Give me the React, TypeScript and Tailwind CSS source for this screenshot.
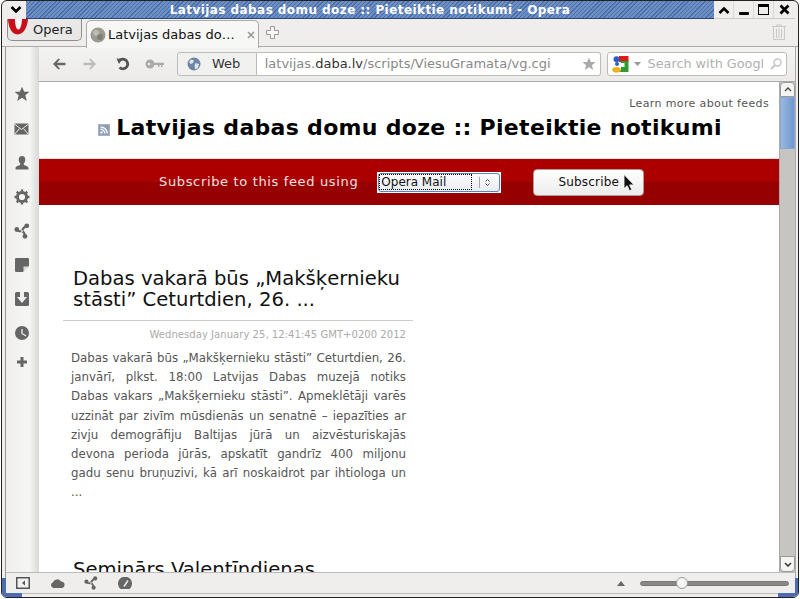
import React from "react";

const G = "#666";

const Star = ({ c = G, s = 16 }: { c?: string; s?: number }) => (
  <svg width={s} height={s} viewBox="0 0 16 16"><path d="M8 .8l2.200 5h5.300l-4.200 3.500 1.500 5.600L8 11.800l-4.800 3.100 1.500-5.600L.5 5.800h5.300z" fill={c} /></svg>
);
const Mail = () => (
  <svg width="15" height="12" viewBox="0 0 15 12"><rect x=".5" y=".5" width="14" height="11" fill={G} /><path d="M.5 1l7 5.500 7-5.500M.5 11.500l5-6M14.500 11.500l-5-6" stroke="#eee" strokeWidth="1" fill="none" /></svg>
);
const User = () => (
  <svg width="16" height="16" viewBox="0 0 16 16"><path d="M8 1c2.200 0 3.300 1.700 3.300 3.800 0 1.500-.7 3-1.500 3.700v1.200c.4.6 4.200 1 4.700 3.200V14.500H1.500v-1.600c.5-2.200 4.300-2.600 4.700-3.200V8.500C5.400 7.800 4.700 6.300 4.700 4.800 4.700 2.700 5.800 1 8 1z" fill={G} /></svg>
);
const Gear = () => (
  <svg width="16" height="16" viewBox="0 0 16 16"><circle cx="8" cy="8" r="4.600" fill="none" stroke={G} strokeWidth="3" /><path d="M8 .5v3M8 12.500v3M.5 8h3M12.500 8h3M2.700 2.700l2.100 2.100M11.200 11.200l2.100 2.100M13.300 2.700l-2.100 2.100M4.800 11.200l-2.100 2.100" stroke={G} strokeWidth="2.400" /></svg>
);
const Unite = ({ s = 16 }: { s?: number }) => (
  <svg width={s} height={s} viewBox="0 0 16 16">
    <g fill={G}>
      <circle cx="2.800" cy="6.500" r="2.400" />
      <circle cx="12.800" cy="2.800" r="2.400" />
      <circle cx="11" cy="13.300" r="2.400" />
    </g>
    <g stroke={G} strokeWidth="2" fill="none">
      <path d="M3 7C5 9 6 8.500 8 8" />
      <path d="M12.500 3C10 4 8.500 6 8 8" />
      <path d="M11 13.500C11 11 10 9 8 8" />
    </g>
    <circle cx="8" cy="8" r=".9" fill="#eee" />
  </svg>
);
const Note = () => (
  <svg width="14" height="14" viewBox="0 0 14 14"><path d="M1 0h12a1 1 0 011 1v7l-6 6H1a1 1 0 01-1-1V1a1 1 0 011-1z" fill={G} /><path d="M8.500 14V8.500H14z" fill="#ddd" /></svg>
);
const Down = () => (
  <svg width="14" height="14" viewBox="0 0 14 14"><rect width="14" height="14" rx="1.500" fill={G} /><path d="M5 0h4v5h3l-5 6-5-6h3z" fill="#f0f0f0" /></svg>
);
const Clock = () => (
  <svg width="14" height="14" viewBox="0 0 14 14"><circle cx="7" cy="7" r="7" fill={G} /><path d="M7 3v4.500L11 10" stroke="#f0f0f0" strokeWidth="1.300" fill="none" /></svg>
);
const Plus = () => (
  <svg width="12" height="12" viewBox="0 0 12 12"><path d="M4.500 1h3v3.500H11v3H7.500V11h-3V7.500H1v-3h3.500z" fill={G} /></svg>
);
const Arrow = ({ c, flip }: { c: string; flip?: boolean }) => (
  <svg width="14" height="12" viewBox="0 0 14 12" style={flip ? { transform: "scaleX(-1)" } : undefined}><path d="M6.500 0.500L1 6l5.500 5.500 1.500-1-3-3.200h8.500V4.700H5l3-3.200z" fill={c} /></svg>
);
const Reload = () => (
  <svg width="14" height="14" viewBox="0 0 14 14"><path d="M4 3.200A4.800 4.800 0 117 11.800a5 5 0 01-3.500-1.400" stroke="#555" strokeWidth="2.800" fill="none" /><path d="M.5 1.500l6 .5-3.500 5z" fill="#555" /></svg>
);
const Key = () => (
  <svg width="20" height="10" viewBox="0 0 20 10"><circle cx="5" cy="5" r="4.500" fill="#aaa" /><circle cx="4" cy="5" r="1.300" fill="#eee" /><path d="M8 3.800h11V6h-1.500v2H16V6h-1.500v2H13V6H8z" fill="#aaa" /></svg>
);
const Globe = () => (
  <svg width="14" height="14" viewBox="0 0 14 14"><circle cx="7" cy="7" r="6.500" fill="#6d86a6" /><path d="M4 2.500l3 1L6 6 3.500 7 2 5zM8.500 6l3.500 1-1 4-2.500 1.500L7.500 9z" fill="#e3e6ea" /></svg>
);
const GoogleG = () => (
  <svg width="17" height="17" viewBox="0 0 17 17">
    <path d="M7 0h9.500v6H7z" fill="#e01b1b" />
    <path d="M8 5h8.500v11H7l2-2V7z" fill="#2f9a2f" />
    <circle cx="4.500" cy="3.300" r="3" fill="#2a5fc7" />
    <circle cx="5" cy="8" r="2" fill="#2a5fc7" />
    <ellipse cx="4.500" cy="13.800" rx="4.300" ry="2.800" fill="#eab01e" />
    <path d="M9 7h3.500v4H9z" fill="#fff" />
  </svg>
);
const Search = () => (
  <svg width="12" height="12" viewBox="0 0 12 12"><circle cx="7.500" cy="4.500" r="3.500" fill="none" stroke="#c4c4c4" strokeWidth="1.400" /><path d="M5 7L1 11" stroke="#c4c4c4" strokeWidth="1.800" /></svg>
);
const Trash = () => (
  <svg width="14" height="16" viewBox="0 0 14 16"><path d="M0 2.500h14M4.500 2.500V1h5v1.500M1.500 3v12.500h11V3M4.500 5v9M7 5v9M9.500 5v9" stroke="#c9c9c6" fill="none" /></svg>
);
const Rss = () => (
  <svg width="12" height="12" viewBox="0 0 12 12"><rect width="12" height="12" fill="#8d9db5" /><rect x=".5" y=".5" width="11" height="11" fill="none" stroke="#a8b4c6" /><circle cx="3.500" cy="8.500" r="1.200" fill="#fff" /><path d="M2.500 5.200a4.300 4.300 0 014.300 4.300M2.500 2.800a6.700 6.700 0 016.700 6.700" stroke="#fff" strokeWidth="1.200" fill="none" /></svg>
);
const Cloud = () => (
  <svg width="15" height="10" viewBox="0 0 15 10"><path d="M3.500 10A3 3 0 013 4.200 4.500 4.500 0 0111 3.500 3.300 3.300 0 0112 10z" fill={G} /></svg>
);
const Gauge = () => (
  <svg width="14" height="12" viewBox="0 0 14 12"><path d="M2.500 12A7 7 0 1111.500 12z" fill={G} /><path d="M6 9.500L10 3.500" stroke="#eee" strokeWidth="1.500" /></svg>
);
const PanelToggle = () => (
  <svg width="14" height="12" viewBox="0 0 14 12"><rect x=".75" y=".75" width="12.500" height="10.500" fill="#f2f2f2" stroke="#555" strokeWidth="1.500" /><path d="M9 3.500v5L6 6z" fill="#555" /></svg>
);
const Cursor = () => (
  <svg width="13" height="19" viewBox="0 0 13 19"><path d="M1 .5v14l3.200-2.800 2.300 5 2.300-1-2.200-4.800H11z" fill="#111" stroke="#fff" strokeWidth=".8" /></svg>
);
const OperaO = () => (
  <svg width="20" height="16" viewBox="0 0 20 16" className="shrink-0"><path d="M0 0h20c-.5 7-4 15.500-10.500 15.500S.5 7 0 0z" fill="#c8101a" /><path d="M7 0h7c-.3 5.500-1.500 10.500-3.700 10.500S7 5.500 7 0z" fill="#f6f6f6" /></svg>
);
const FavIcon = () => (
  <svg width="16" height="16" viewBox="0 0 16 16"><circle cx="8" cy="8" r="7.500" fill="#9a9a90" /><circle cx="6" cy="6" r="3" fill="#bdbdb3" /><circle cx="10" cy="10" r="3" fill="#7f7f76" /></svg>
);

const sideIcons = [
  { el: <Star />, cls: "h-[36px]" },
  { el: <Mail />, cls: "h-[34px]" },
  { el: <User />, cls: "h-[34px]" },
  { el: <Gear />, cls: "h-[34px]" },
  { el: <Unite />, cls: "h-[34px]" },
  { el: <Note />, cls: "h-[34px]" },
  { el: <Down />, cls: "h-[34px]" },
  { el: <Clock />, cls: "h-[34px]" },
  { el: <Plus />, cls: "h-[24px]" },
];

const bodyLines = [
  "Dabas vakarā būs „Makšķernieku stāsti” Ceturtdien, 26.",
  "janvārī, plkst. 18:00 Latvijas Dabas muzejā notiks",
  "Dabas vakars „Makšķernieku stāsti”. Apmeklētāji varēs",
  "uzzināt par zivīm mūsdienās un senatnē – iepazīties ar",
  "zivju demogrāfiju Baltijas jūrā un aizvēsturiskajās",
  "devona perioda jūrās, apskatīt gandrīz 400 miljonu",
  "gadu senu bruņuzivi, kā arī noskaidrot par ihtiologa un",
];

export default function App() {
  return (
    <div className="w-[800px] h-[599px] overflow-hidden bg-white pl-px font-['DejaVu_Sans',sans-serif] text-[#222]">
      <div className="w-[798px] h-[598px] relative overflow-hidden flex flex-col border border-[#222] rounded-[6px] bg-[#efeeed]">
        {/* title bar */}
        <div className="h-[18px] flex shrink-0">
          <div className="w-[24px] flex items-center justify-center pl-[4px]">
            <svg width="12" height="8" viewBox="0 0 12 8"><path d="M1.500 1L6 5.500 10.500 1" stroke="#000" strokeWidth="2.600" fill="none" /></svg>
          </div>
          <div className="flex-1 flex items-center justify-center text-white font-bold text-[12px] tracking-[0.43px] border-b border-[#24457f] bg-[repeating-linear-gradient(135deg,#4a6ea9_0px,#4a6ea9_1px,#6d8fc4_1px,#6d8fc4_3px)]">
            Latvijas dabas domu doze :: Pieteiktie notikumi - Opera
          </div>
          <div className="w-[81px] mr-[3px] flex border-b border-[#ccc]">
            <div className="w-[20px] flex items-center justify-center border-r border-[#d8d8d6]">
              <svg width="12" height="8" viewBox="0 0 12 8"><path d="M1.500 7L6 2.500 10.500 7" stroke="#000" strokeWidth="2.600" fill="none" /></svg>
            </div>
            <div className="w-[20px] flex items-center justify-center border-r border-[#d8d8d6]">
              <div className="w-[10px] h-[3px] bg-black mt-[7px] rounded-[1px]" />
            </div>
            <div className="w-[20px] flex items-center justify-center border-r border-[#d8d8d6]">
              <div className="w-[11px] h-[11px] border border-black border-t-[3px]" />
            </div>
            <div className="w-[21px] flex items-center justify-center">
              <svg width="11" height="11" viewBox="0 0 11 11"><path d="M1.500 1.500l8 8M9.500 1.500l-8 8" stroke="#000" strokeWidth="2.800" /></svg>
            </div>
          </div>
        </div>
        {/* tab row */}
        <div className="h-[28px] shrink-0 flex items-start pl-[5px] pr-[12px] border-b border-[#aaa]">
          <div className="h-[22px] w-[75px] bg-[#e9e8e6] border border-t-0 border-[#8f8f8f] rounded-b-[5px] flex items-start overflow-hidden">
            <OperaO />
            <span className="text-[13px] leading-[22px] text-[#222] ml-[5px]">Opera</span>
          </div>
          <div className="h-[28px] w-[173px] ml-[4px] mt-px bg-[#f7f7f6] border border-b-0 border-[#aaa] rounded-t-[5px] flex items-center pl-[3px] relative z-10">
            <FavIcon />
            <span className="text-[13px] text-[#111] ml-[2px] whitespace-nowrap">Latvijas dabas do…</span>
            <svg className="ml-[12px]" width="8" height="8" viewBox="0 0 8 8"><path d="M1 1l6 6M7 1L1 7" stroke="#999" strokeWidth="1.600" /></svg>
          </div>
          <div className="ml-[7px] mt-[7px]">
            <svg width="13" height="13" viewBox="0 0 13 13"><path d="M4.500.5h4v4h4v4h-4v4h-4v-4h-4v-4h4z" fill="#f8f8f8" stroke="#999" /></svg>
          </div>
          <div className="ml-auto mt-[5px]"><Trash /></div>
        </div>
        {/* main */}
        <div className="flex-1 min-h-0 flex">
          <div className="w-[4px] bg-[#efeeed] border-r border-[#999] shrink-0" />
          <div className="flex-1 min-w-0 flex flex-col">
            <div className="flex-1 min-h-0 flex">
              {/* side panel */}
              <div className="w-[33px] shrink-0 bg-[linear-gradient(90deg,#efeeed,#f6f6f5_70%,#d8d8d6)] flex flex-col items-center pt-[29px] pr-[2px]">
                {sideIcons.map((it, i) => (
                  <div key={i} className={`${it.cls} flex items-center justify-center`}>{it.el}</div>
                ))}
              </div>
              <div className="flex-1 min-w-0 flex flex-col">
                {/* toolbar */}
                <div className="h-[35px] shrink-0 flex items-center bg-[linear-gradient(#f3f3f2,#ecebea)] border-b border-[#aaa] pl-[13px] pr-[8px]">
                  <Arrow c="#666" />
                  <div className="ml-[17px]"><Arrow c="#bbb" flip /></div>
                  <div className="ml-[19px]"><Reload /></div>
                  <div className="ml-[15px]"><Key /></div>
                  <div className="ml-[12px] w-[80px] h-[24px] rounded-l-[3px] border border-[#bbb] bg-[#f1f1f0] flex items-center pl-[9px]">
                    <Globe />
                    <span className="text-[13px] text-[#333] ml-[11px]">Web</span>
                  </div>
                  <div className="w-[345px] h-[24px] rounded-r-[3px] border border-l-0 border-[#bbb] bg-white flex items-center pl-[8px] pr-[4px]">
                    <span className="text-[13px] text-[#888] whitespace-nowrap">latvijas.<span className="text-[#333]">daba.lv</span>/scripts/ViesuGramata/vg.cgi</span>
                    <div className="ml-auto"><Star c="#aaa" s={14} /></div>
                  </div>
                  <div className="ml-[6px] w-[181px] h-[24px] rounded-[3px] border border-[#bbb] bg-white flex items-center pl-[4px] pr-[4px]">
                    <GoogleG />
                    <svg className="ml-[5px] shrink-0" width="7" height="4" viewBox="0 0 7 4"><path d="M0 0h7L3.500 4z" fill="#999" /></svg>
                    <span className="text-[12.800px] text-[#b0b0b0] ml-[7px] whitespace-nowrap">Search with Googl</span>
                    <div className="ml-auto shrink-0"><Search /></div>
                  </div>
                </div>
                <div className="flex-1 min-h-0 flex">
                  {/* page */}
                  <div className="flex-1 min-w-0 bg-white overflow-hidden flex flex-col">
                    <div className="h-[76px] shrink-0 flex flex-col">
                      <div className="text-[11px] tracking-[0.37px] text-[#555] text-right pr-[10px] pt-[15px] leading-[13px]">Learn more about feeds</div>
                      <div className="flex items-center justify-center pt-[4px] pl-[2px]">
                        <div className="mr-[6px] mt-[3px]"><Rss /></div>
                        <span className="text-[22px] font-bold text-black tracking-[0.3px] leading-[28px]">Latvijas dabas domu doze :: Pieteiktie notikumi</span>
                      </div>
                    </div>
                    <div className="h-[47px] shrink-0 border-t border-[#e0e0e0] bg-[linear-gradient(#ac0000_0%,#ac0000_50%,#960000_50%,#960000_100%)] flex items-center">
                      <span className="text-[13px] text-[#f4e0e0] ml-[120px] tracking-[0.65px]">Subscribe to this feed using</span>
                      <div className="ml-[19px] w-[124px] h-[21px] bg-white p-[1px]">
                        <div className="w-full h-full rounded-[3px] border border-[#5c85b8] bg-[linear-gradient(#fbfcfe,#e9edf5)] flex items-center">
                          <span className="text-[12px] text-[#111] border border-dotted border-black leading-[14px] w-[93px] pl-px">Opera Mail</span>
                          <div className="ml-[7px] w-px h-[11px] bg-[#aaa]" />
                          <svg className="ml-[5px]" width="5" height="9" viewBox="0 0 5 9"><path d="M.5 3.500l2-2 2 2M.5 5.500l2 2 2-2" stroke="#555" fill="none" /></svg>
                        </div>
                      </div>
                      <div className="ml-[32px] w-[111px] h-[27px] rounded-[4px] border border-[#b09a9a] bg-[linear-gradient(#ffffff,#ececec)] flex items-center justify-center relative">
                        <span className="text-[12px] tracking-[0.2px] text-[#111]">Subscribe</span>
                        <div className="absolute left-[89px] top-[4px]"><Cursor /></div>
                      </div>
                    </div>
                    <div className="w-[350px] ml-[24px] pt-[63px]">
                      <h2 className="text-[19.600px] leading-[21px] text-[#111] pl-[10px] pb-[10px] border-b border-[#ccc]">Dabas vakarā būs „Makšķernieku stāsti” Ceturtdien, 26. ...</h2>
                      <div className="text-[10px] leading-[12px] text-[#aaa] text-right pr-[7px] pt-[8px] tracking-[0.05px]">Wednesday January 25, 12:41:45 GMT+0200 2012</div>
                      <div className="text-[11.800px] leading-[19.200px] text-[#555] pl-[8px] pr-[7px] pt-[8px]">
                        {bodyLines.map((line) => (
                          <p key={line} className="text-justify [text-align-last:justify]">{line}</p>
                        ))}
                        <p>...</p>
                      </div>
                      <h2 className="text-[19.600px] leading-[21px] text-[#111] pl-[10px] pt-[56px] whitespace-nowrap">Seminārs Valentīndienas</h2>
                    </div>
                  </div>
                  {/* scrollbar */}
                  <div className="w-[16px] shrink-0 bg-[#c6c5c2] flex flex-col border-l border-[#aaa]">
                    <div className="h-[15px] bg-[#f4f4f3] border border-[#999] rounded-t-[4px] flex items-center justify-center">
                      <svg width="8" height="5" viewBox="0 0 8 5"><path d="M1 4l3-3 3 3" stroke="#444" strokeWidth="1.300" fill="none" /></svg>
                    </div>
                    <div className="h-[52px] bg-[linear-gradient(90deg,#9ab8e0,#6f97cf)] border border-[#8aa8d2]" />
                    <div className="flex-1" />
                    <div className="h-[16px] bg-[#f4f4f3] border border-[#999] rounded-b-[4px] flex items-center justify-center">
                      <svg width="8" height="5" viewBox="0 0 8 5"><path d="M1 1l3 3 3-3" stroke="#333" strokeWidth="1.500" fill="none" /></svg>
                    </div>
                  </div>
                </div>
              </div>
            </div>
            {/* status bar */}
            <div className="h-[21px] shrink-0 border-t border-[#bbb] bg-[#efeeed] flex items-center pl-[10px]">
              <PanelToggle />
              <div className="ml-[20px]"><Cloud /></div>
              <div className="ml-[19px]"><Unite s={14} /></div>
              <div className="ml-[20px]"><Gauge /></div>
              <svg className="ml-[485px]" width="8" height="5" viewBox="0 0 8 5"><path d="M0 5l4-5 4 5z" fill="#666" /></svg>
              <div className="ml-[15px] w-[149px] h-[5px] rounded-full bg-[#888] border border-[#777] relative">
                <div className="absolute left-[35px] top-[-5px] w-[12px] h-[12px] rounded-full bg-[#f6f6f6] border border-[#999]" />
              </div>
            </div>
            <div className="h-[4px] shrink-0 bg-[#efeeed] border-t border-[#bbb]" />
          </div>
          <div className="w-[3px] shrink-0 bg-[#efeeed] border-l border-[#aaa]" />
        </div>
        {/* window-frame highlight at the two lower corners */}
        <div className="absolute left-0 bottom-0 w-[4px] h-[19px] bg-[#4a6cb0]" />
        <div className="absolute left-0 bottom-0 w-[20px] h-[4px] bg-[#4a6cb0]" />
        <div className="absolute right-0 bottom-0 w-[3px] h-[19px] bg-[#4a6cb0]" />
        <div className="absolute right-0 bottom-0 w-[20px] h-[4px] bg-[#4a6cb0]" />
      </div>
    </div>
  );
}
